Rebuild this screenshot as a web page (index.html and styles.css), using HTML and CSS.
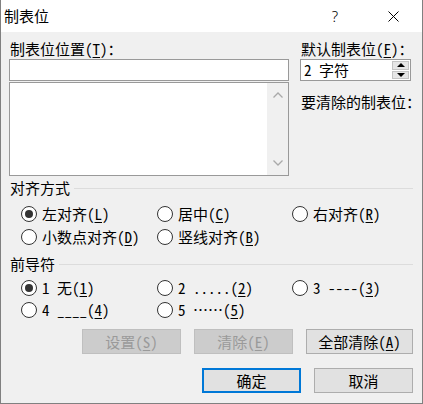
FILE: index.html
```html
<!DOCTYPE html>
<html lang="zh-CN">
<head>
<meta charset="utf-8">
<title>制表位</title>
<link rel="stylesheet" href="styles.css">
</head>
<body>
<div class="window">
  <div class="titlebar">
    <span class="title">制表位</span>
    <span class="tb-btn help">?</span>
    <span class="tb-btn close">
      <svg width="11" height="11" viewBox="0 0 11 11"><path d="M0.5 0.5 L10.5 10.5 M10.5 0.5 L0.5 10.5" stroke="#000" stroke-width="1" fill="none"/></svg>
    </span>
  </div>
  <div class="content">
    <div class="top">
      <div class="col-left">
        <div class="label">制表位位置(<u>T</u>)：</div>
        <div class="input"></div>
        <div class="listbox">
          <div class="list"></div>
          <div class="scrollbar">
            <div class="arrow">
              <svg width="10" height="6" viewBox="0 0 10 6"><path d="M0.5 5.5 L5 1 L9.5 5.5" stroke="#a9a9a9" stroke-width="1.3" fill="none"/></svg>
            </div>
            <div class="track"></div>
            <div class="arrow">
              <svg width="10" height="6" viewBox="0 0 10 6"><path d="M0.5 0.5 L5 5 L9.5 0.5" stroke="#a9a9a9" stroke-width="1.3" fill="none"/></svg>
            </div>
          </div>
        </div>
      </div>
      <div class="col-right">
        <div class="label">默认制表位(<u>F</u>)：</div>
        <div class="spin">
          <span class="spin-text">2 字符</span>
          <div class="spinbtns">
            <div class="sb"><span class="tri-up"></span></div>
            <div class="sb"><span class="tri-down"></span></div>
          </div>
        </div>
        <div class="label clear-label">要清除的制表位：</div>
      </div>
    </div>

    <div class="group-head align-head"><span>对齐方式</span><div class="rule"></div></div>
    <div class="radios align-radios">
      <div class="radio checked"><span class="circle"></span><span class="rl">左对齐(<u>L</u>)</span></div>
      <div class="radio"><span class="circle"></span><span class="rl">居中(<u>C</u>)</span></div>
      <div class="radio"><span class="circle"></span><span class="rl">右对齐(<u>R</u>)</span></div>
      <div class="radio"><span class="circle"></span><span class="rl">小数点对齐(<u>D</u>)</span></div>
      <div class="radio"><span class="circle"></span><span class="rl">竖线对齐(<u>B</u>)</span></div>
    </div>

    <div class="group-head leader-head"><span>前导符</span><div class="rule"></div></div>
    <div class="radios leader-radios">
      <div class="radio checked"><span class="circle"></span><span class="rl">1 无(<u>1</u>)</span></div>
      <div class="radio"><span class="circle"></span><span class="rl">2 .....(<u>2</u>)</span></div>
      <div class="radio"><span class="circle"></span><span class="rl">3 ----(<u>3</u>)</span></div>
      <div class="radio"><span class="circle"></span><span class="rl">4 ____(<u>4</u>)</span></div>
      <div class="radio"><span class="circle"></span><span class="rl">5 ……(<u>5</u>)</span></div>
    </div>

    <div class="btnrow row1">
      <div class="btn disabled">设置(<u>S</u>)</div>
      <div class="btn disabled">清除(<u>E</u>)</div>
      <div class="btn wide">全部清除(<u>A</u>)</div>
    </div>
    <div class="btnrow row2">
      <div class="btn default">确定</div>
      <div class="btn">取消</div>
    </div>
  </div>
</div>
</body>
</html>
```

FILE: styles.css
```css
* { box-sizing: border-box; }
html, body { margin: 0; padding: 0; }
body {
  width: 423px;
  height: 404px;
  overflow: hidden;
  background: #f0f0f0;
  font-family: "Noto Sans Mono CJK SC", "Noto Sans CJK SC", "Noto Sans", sans-serif;
  font-size: 15px;
  color: #000;
}
u { text-decoration: underline; text-underline-offset: 2px; text-decoration-thickness: 1px; }

.window {
  width: 423px;
  height: 404px;
  border: 1px solid #808080;
  border-top: none;
  background: #f0f0f0;
  display: flex;
  flex-direction: column;
}

.titlebar {
  height: 32px;
  flex-shrink: 0;
  background: #fff;
  display: flex;
  align-items: center;
}
.title { flex: 1; padding-left: 3px; line-height: 32px; font-family: "Noto Sans CJK SC", sans-serif; }
.tb-btn {
  width: 58px;
  height: 32px;
  display: flex;
  align-items: center;
  justify-content: center;
}
.help { font-family: "Noto Sans", sans-serif; font-size: 15px; font-weight: 300; }

.content { padding: 6px 9px 0 8px; }

.top {
  display: grid;
  grid-template-columns: 280px 111px;
  column-gap: 11px;
}
.label { height: 21px; line-height: 21px; white-space: nowrap; padding-left: 1px; }
.input {
  height: 22px;
  border: 1px solid #999;
  background: #fff;
}
.listbox {
  margin-top: 1px;
  height: 94px;
  border: 1px solid #999;
  background: #fff;
  display: flex;
}
.list { flex: 1; }
.scrollbar {
  width: 21px;
  background: #f0f0f0;
  display: flex;
  flex-direction: column;
}
.arrow { height: 24px; display: flex; align-items: center; justify-content: center; }
.track { flex: 1; }

.spin {
  height: 22px;
  border: 1px solid #999;
  background: #fff;
  display: flex;
  align-items: center;
}
.spin-text { flex: 1; padding-left: 3px; line-height: 20px; white-space: nowrap; }
.spinbtns {
  width: 17px;
  height: 18px;
  margin-right: 1px;
  display: flex;
  flex-direction: column;
  gap: 1px;
}
.sb {
  flex: 1;
  background: #e6e6e6;
  border: 1px solid #c4c4c4;
  display: flex;
  align-items: center;
  justify-content: center;
}
.tri-up { width: 0; height: 0; border-left: 4px solid transparent; border-right: 4px solid transparent; border-bottom: 4px solid #000; }
.tri-down { width: 0; height: 0; border-left: 4px solid transparent; border-right: 4px solid transparent; border-top: 4px solid #000; }
.clear-label { margin-top: 10px; }

.group-head {
  height: 20px;
  display: flex;
  align-items: center;
  gap: 4px;
  padding-left: 1px;
  line-height: 20px;
}
.group-head .rule { flex: 1; height: 1px; background: #dcdcdc; }
.align-head { margin-top: 2px; }
.leader-head { margin-top: 6px; }

.radios {
  display: grid;
  grid-template-columns: 136px 135px 1fr;
  padding-left: 12px;
}
.align-radios { margin-top: 4px; grid-auto-rows: 23px; }
.leader-radios { margin-top: 3px; grid-auto-rows: 22px; }
.radio { display: flex; align-items: center; gap: 5px; white-space: nowrap; }
.circle {
  width: 16px;
  height: 16px;
  border: 1px solid #333;
  border-radius: 50%;
  background: #fff;
  flex-shrink: 0;
  display: flex;
  align-items: center;
  justify-content: center;
}
.radio.checked .circle::after {
  content: "";
  width: 8px;
  height: 8px;
  border-radius: 50%;
  background: #333;
}
.rl { line-height: 20px; }

.btnrow { display: flex; justify-content: flex-end; gap: 13px; }
.row1 { margin-top: 8px; }
.row2 { margin-top: 14px; }
.btn {
  width: 99px;
  height: 25px;
  border: 1px solid #adadad;
  background: #e1e1e1;
  display: flex;
  align-items: center;
  justify-content: center;
  line-height: 20px;
  white-space: nowrap;
}
.btn.wide { width: 107px; }
.btn.disabled { background: #cccccc; border-color: #bfbfbf; color: #9a9a9a; }
.btn.default { border: 2px solid #0078d7; }
```
